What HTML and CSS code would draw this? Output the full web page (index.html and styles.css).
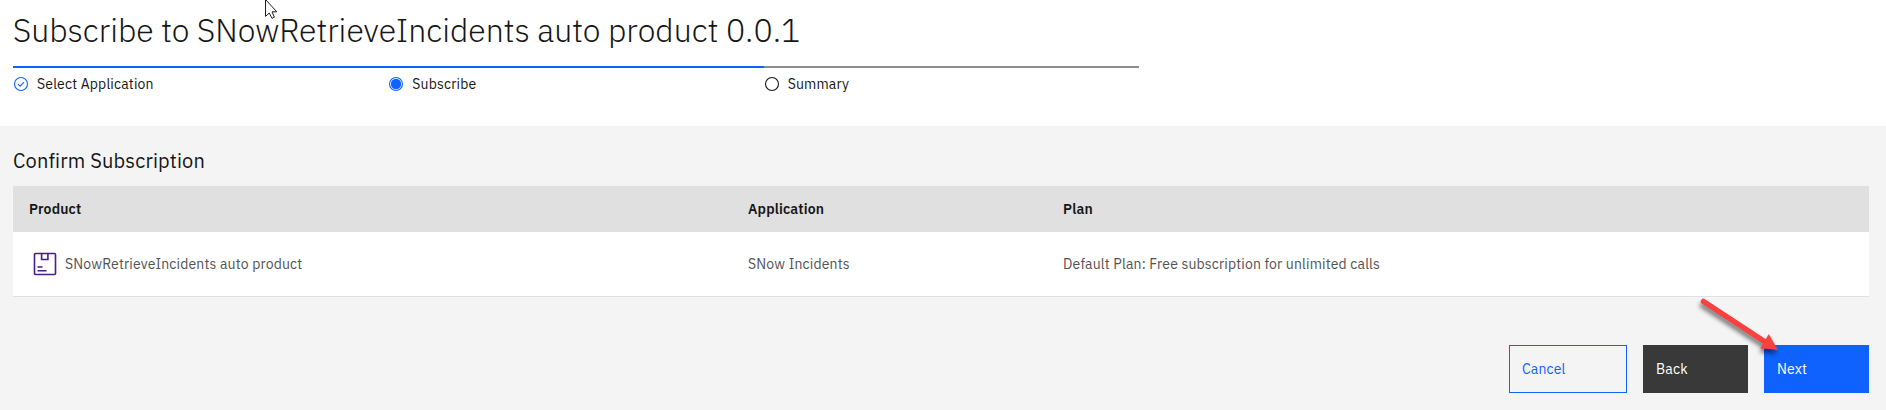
FILE: index.html
```html
<!DOCTYPE html>
<html lang="en">
<head>
<meta charset="utf-8">
<title>Subscribe</title>
<link rel="stylesheet" href="styles.css">
</head>
<body>
<header class="head">
  <h1 class="title">Subscribe to SNowRetrieveIncidents auto product 0.0.1</h1>
  <ol class="steps">
    <li class="step step-done">
      <svg class="step-icon" width="16" height="16" viewBox="0 0 16 16"><circle cx="8" cy="8" r="6.5"/><path d="M5 8.2 7.1 10.2 11 6.2"/></svg>
      <span class="step-label">Select Application</span>
    </li>
    <li class="step step-done">
      <svg class="step-icon" width="16" height="16" viewBox="0 0 16 16"><circle cx="8" cy="8" r="6.5"/><circle class="dot" cx="8" cy="8" r="5.2"/></svg>
      <span class="step-label">Subscribe</span>
    </li>
    <li class="step">
      <svg class="step-icon" width="16" height="16" viewBox="0 0 16 16"><circle cx="8" cy="8" r="6.5"/></svg>
      <span class="step-label">Summary</span>
    </li>
  </ol>
</header>
<main class="main">
  <h2 class="subtitle">Confirm Subscription</h2>
  <div class="table">
    <div class="row row-head"><span>Product</span><span>Application</span><span>Plan</span></div>
    <div class="row row-body">
      <span class="product">
        <svg class="box-icon" width="24" height="24" viewBox="0 0 24 24"><rect x="1.5" y="1.5" width="21" height="21" rx="1"/><path d="M8.6 1.5v6h6.3v-6M4.5 15h5M4.5 18.7h9"/></svg>
        <span>SNowRetrieveIncidents auto product</span>
      </span>
      <span>SNow Incidents</span>
      <span>Default Plan: Free subscription for unlimited calls</span>
    </div>
  </div>
  <div class="actions">
    <button class="btn cancel">Cancel</button>
    <button class="btn back">Back</button>
    <button class="btn next">Next</button>
  </div>
</main>
<svg class="cursor" width="14" height="20" viewBox="0 0 14 20"><path d="M.5 -.5V16.4L4.2 13 7 18.3 9.4 17.2 7 11.8H11.8Z"/></svg>
<svg class="arrow" width="100" height="70" viewBox="0 0 100 70"><path d="M13.5 12.5 76 53.5" class="shaft"/><path class="tip" d="M78.8 45.5 87.4 60.4 70.8 59.2Z"/></svg>
</body>
</html>
```
FILE: styles.css
```css
* { box-sizing: border-box; }
body { margin: 0; width: 1886px; height: 410px; overflow: hidden; position: relative; background: #f4f4f4; color: #161616; font: 14px/18px "IBM Plex Sans", Roboto, sans-serif; letter-spacing: .16px; }
.head { height: 126px; padding: 10px 13px 0; background: #fff; }
.title { margin: 0; font-size: 32px; line-height: 40px; font-weight: 300; letter-spacing: 0; white-space: nowrap; }
.steps { display: flex; list-style: none; margin: 16px 0 0; padding: 0; width: 1126px; }
.step { flex: 1; display: flex; gap: 8px; border-top: 2px solid #8d8d8d; padding-top: 7px; }
.step-done { border-color: #0f62fe; }
.step-icon { margin-top: 1px; fill: none; stroke: #161616; stroke-width: 1.1; }
.step-done .step-icon { stroke: #0f62fe; }
.step-icon .dot { fill: #0f62fe; stroke: none; }
.main { padding: 22px 17px 0 13px; }
.subtitle { margin: 0; font-size: 20px; line-height: 26px; font-weight: 400; letter-spacing: 0; font-variant-ligatures: none; }
.table { margin-top: 12px; }
.row { display: grid; grid-template-columns: 719px 315px 1fr; align-items: center; padding: 0 16px; }
.row-head { height: 46px; background: #e0e0e0; font-weight: 600; }
.row-body { height: 65px; background: #fff; color: #525252; border-bottom: 1px solid #e0e0e0; }
.product { display: flex; align-items: center; padding-left: 4px; gap: 8px; }
.box-icon { fill: none; stroke: #491d8b; stroke-width: 1.6; }
.actions { display: flex; justify-content: flex-end; gap: 16px; margin-top: 48px; }
.btn { height: 48px; width: 105px; padding: 0 0 0 13px; border: 0; text-align: left; font: inherit; letter-spacing: .16px; color: #fff; }
.cancel { width: 118px; border: 1px solid #0f62fe; padding-left: 12px; background: transparent; color: #0f62fe; }
.back { background: #393939; }
.next { background: #0f62fe; }
.subtitle { letter-spacing: .16px; }
.cursor { position: absolute; left: 265px; top: 0; fill: #fff; stroke: #1b1b2b; stroke-width: 1; }
.arrow { position: absolute; left: 1690px; top: 289px; filter: drop-shadow(-1px 4px 2px rgba(0,0,0,.5)); }
.shaft { stroke: #fb4040; stroke-width: 5.5; stroke-linecap: round; fill: none; }
.tip { fill: #fb4040; stroke: #fb4040; stroke-width: .6; }
```
